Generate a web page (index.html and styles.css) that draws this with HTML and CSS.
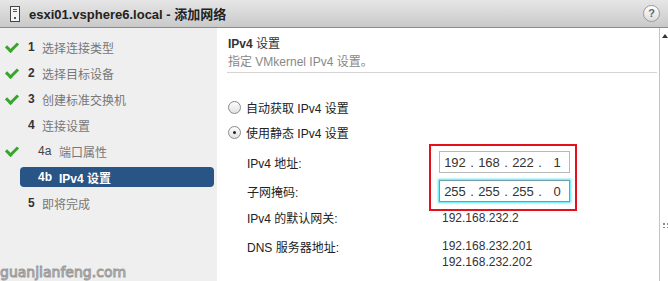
FILE: index.html
```html
<!DOCTYPE html>
<html lang="zh-CN">
<head>
    <meta charset="UTF-8">
    <title>esxi01.vsphere6.local - 添加网络</title>
    <link rel="stylesheet" href="styles.css">
</head>
<body>
    <!-- Titelleiste -->
    <div class="titlebar">
        <svg class="host-icon" width="10" height="16" viewBox="0 0 10 16">
            <rect x="0.5" y="0.5" width="9" height="15" fill="#f4f4f4" stroke="#444"/>
            <line x1="3" y1="3.5" x2="7" y2="3.5" stroke="#555"/>
            <line x1="3" y1="5.5" x2="7" y2="5.5" stroke="#555"/>
            <rect x="4" y="11" width="2" height="2" fill="#555"/>
        </svg>
        <span class="title">esxi01.vsphere6.local - 添加网络</span>
        <span class="help">?</span>
    </div>

    <div class="wizard">
        <!-- Schritte -->
        <ul class="steps">
            <li class="step"><span class="check"></span><b>1</b>选择连接类型</li>
            <li class="step"><span class="check"></span><b>2</b>选择目标设备</li>
            <li class="step"><span class="check"></span><b>3</b>创建标准交换机</li>
            <li class="step"><span class="nocheck"></span><b>4</b>连接设置</li>
            <li class="step sub"><span class="check"></span><b>4a</b>端口属性</li>
            <li class="step active"><span class="pill"><b>4b</b>IPv4 设置</span></li>
            <li class="step"><span class="nocheck"></span><b>5</b>即将完成</li>
        </ul>

        <!-- Inhalt -->
        <div class="page">
            <div class="page-head">
                <div class="page-title"><b>IPv4</b> 设置</div>
                <div class="page-desc">指定 VMkernel IPv4 设置。</div>
            </div>

            <div class="radios">
                <label class="radio"><span class="dot"></span>自动获取 IPv4 设置</label>
                <label class="radio"><span class="dot on"></span>使用静态 IPv4 设置</label>
            </div>

            <div class="form">
                <div class="label">IPv4 地址:</div>
                <div class="ip"><span>192</span><i>.</i><span>168</span><i>.</i><span>222</span><i>.</i><span>1</span></div>
                <div class="label">子网掩码:</div>
                <div class="ip focus"><span>255</span><i>.</i><span>255</span><i>.</i><span>255</span><i>.</i><span>0</span></div>
                <div class="label">IPv4 的默认网关:</div>
                <div class="value">192.168.232.2</div>
                <div class="label dns">DNS 服务器地址:</div>
                <div class="value dns">192.168.232.201<br>192.168.232.202</div>
                <div class="mark"></div>
            </div>
        </div>

        <div class="scroll">
            <span class="arrow"></span>
            <span class="grip"></span>
        </div>
    </div>

    <div class="watermark">guanjianfeng.com</div>
</body>
</html>
```

FILE: styles.css
```css
/* Allgemein */
body {
    margin: 0;
    width: 668px;
    height: 281px;
    overflow: hidden;
    position: relative;
    font-family: 'Liberation Sans', Arial, 'Noto Sans CJK SC', sans-serif;
    font-size: 12px;
    color: #333;
    background: #fff;
}

/* Titelleiste */
.titlebar {
    height: 27px;
    display: flex;
    align-items: center;
    padding-left: 10px;
    background: linear-gradient(#e6e6e6, #c9c9c9);
    border-bottom: 1px solid #8c8c8c;
}

.host-icon {
    margin-right: 9px;
}

.title {
    font-size: 13px;
    font-weight: bold;
    color: #222;
    flex: 1;
}

.help {
    width: 15px;
    height: 15px;
    margin-right: 8px;
    border: 1px solid #9a9a9a;
    border-radius: 50%;
    background: linear-gradient(#ffffff, #dcdcdc);
    color: #666;
    font-weight: bold;
    font-size: 11px;
    text-align: center;
    line-height: 15px;
}

/* Wizard */
.wizard {
    display: flex;
    height: 253px;
}

.steps {
    width: 217px;
    margin: 0;
    padding: 6px 0 0 0;
    list-style: none;
    background: #efefef;
}

.step {
    height: 26px;
    display: flex;
    align-items: center;
    color: #777;
}

.step b {
    color: #333;
    font-weight: bold;
    width: 14px;
}

.check,
.nocheck {
    width: 28px;
    height: 26px;
    flex: none;
    position: relative;
}

.check::after {
    content: "";
    position: absolute;
    left: 6px;
    top: 8px;
    width: 9px;
    height: 5px;
    border-left: 3px solid #3aa52c;
    border-bottom: 3px solid #3aa52c;
    transform: rotate(-45deg);
}

.step.sub b {
    margin-left: 10px;
    width: 21px;
    font-weight: normal;
    color: #444;
}

.pill {
    flex: 1;
    height: 20px;
    margin: 0 3px 0 20px;
    padding-left: 18px;
    display: flex;
    align-items: center;
    background: #285586;
    border-radius: 4px;
    color: #fff;
    font-weight: bold;
}

.pill b {
    color: #fff;
    width: 21px;
}

/* Inhalt */
.page {
    flex: 1;
    padding: 7px 0 0 10px;
}

.page-head {
    border-bottom: 1px solid #d4d4d4;
    margin-right: 2px;
    padding-left: 1px;
}

.page-title {
    line-height: 18px;
    color: #333;
}

.page-desc {
    line-height: 18px;
    color: #888;
    padding-bottom: 1px;
}

.radios {
    padding-top: 22px;
}

.radio {
    height: 25px;
    display: flex;
    align-items: center;
    color: #222;
}

.dot {
    width: 11px;
    height: 11px;
    margin: 0 5px 0 1px;
    border: 1px solid #8a8a8a;
    border-radius: 50%;
    background: linear-gradient(#fdfdfd, #e2e2e2);
    position: relative;
}

.dot.on::after {
    content: "";
    position: absolute;
    left: 4px;
    top: 4px;
    width: 3px;
    height: 3px;
    border-radius: 50%;
    background: #222;
}

.form {
    position: relative;
    display: grid;
    grid-template-columns: 192px 130px;
    align-items: center;
    padding: 6px 0 0 20px;
    row-gap: 7px;
    color: #333;
}

.label {
    color: #222;
}

.ip {
    height: 20px;
    border: 1px solid #b9b9b9;
    display: flex;
    align-items: center;
    padding-left: 3px;
    font-size: 13px;
    color: #333;
    width: 126px;
}

.ip span {
    width: 24px;
    text-align: center;
}

.ip i {
    font-style: normal;
    width: 10px;
    text-align: center;
}

.ip.focus {
    border-color: #6f9fb0;
    box-shadow: 0 0 2px 1px #44e6f6;
}

.value {
    padding-left: 3px;
    line-height: 16px;
}

.label.dns {
    align-self: start;
    margin-top: 5px;
}

.value.dns {
    margin-top: 5px;
}

/* Markierung */
.mark {
    position: absolute;
    left: 202px;
    top: -1px;
    width: 144px;
    height: 63px;
    border: 2px solid #e5101a;
}

/* Scrollleiste */
.scroll {
    width: 8px;
    border-left: 1px solid #c4c4c4;
    position: relative;
}

.arrow {
    position: absolute;
    left: 2px;
    top: 6px;
    border-left: 3px solid transparent;
    border-right: 3px solid transparent;
    border-bottom: 4px solid #333;
}

.grip {
    position: absolute;
    left: 2px;
    top: 194px;
    width: 6px;
    height: 6px;
    background:
        radial-gradient(circle, #888 50%, transparent 51%) 0 0 / 4px 4px;
}

/* Wasserzeichen */
.watermark {
    position: absolute;
    left: 0;
    bottom: 1px;
    font-size: 16px;
    font-family: 'DejaVu Sans', sans-serif;
    font-size: 14px;
    color: #f2f2f2;
    -webkit-text-stroke: 1px #9a9a9a;
    letter-spacing: 0;
}
```
